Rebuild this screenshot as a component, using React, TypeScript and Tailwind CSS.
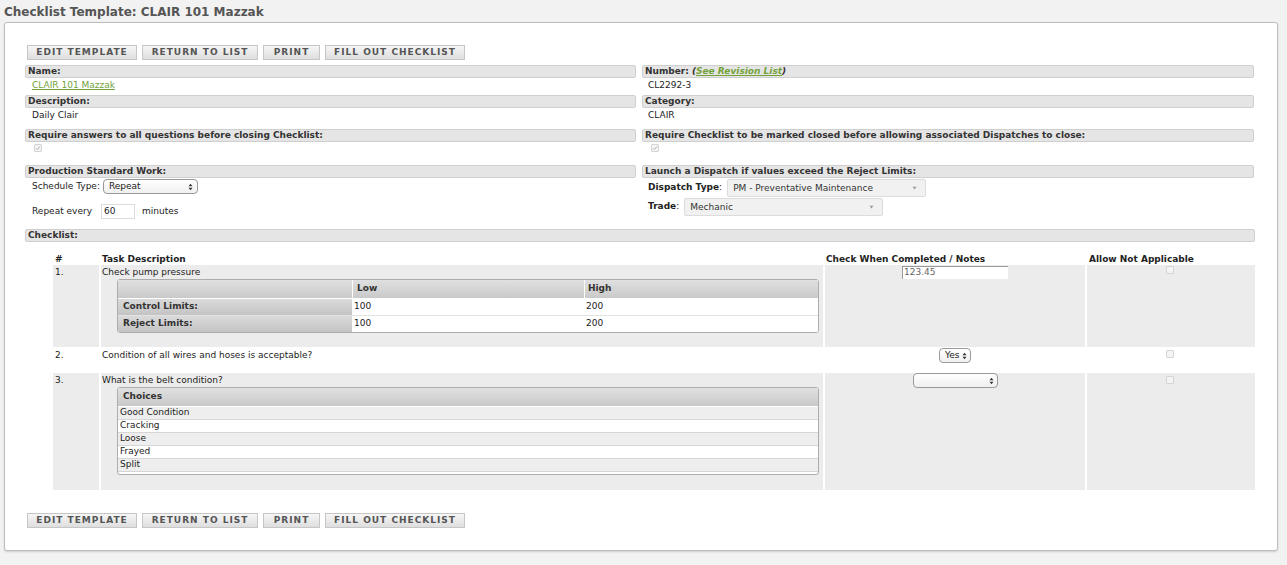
import React from "react";

const Button = ({ label, width }: { label: string; width: string }) => (
  <div
    className={`${width} h-[15px] flex items-center justify-center border border-[#c6c6c6] bg-gradient-to-b from-[#f6f6f6] to-[#dedede] text-[9px] font-bold tracking-[1px] text-[#555] leading-none`}
  >
    {label}
  </div>
);

const ButtonBar = () => (
  <div className="flex gap-[5px] pl-[2px]">
    <Button label="EDIT TEMPLATE" width="w-[110px]" />
    <Button label="RETURN TO LIST" width="w-[116px]" />
    <Button label="PRINT" width="w-[57px]" />
    <Button label="FILL OUT CHECKLIST" width="w-[140px]" />
  </div>
);

const SectionHeader = ({ children }: { children: React.ReactNode }) => (
  <div className="h-[13px] flex items-center border border-[#cfcfcf] rounded-[2px] bg-[#e5e5e5] pl-[2px] text-[9px] font-bold text-[#333] leading-none">
    {children}
  </div>
);

const Checkbox = ({ checked = false }: { checked?: boolean }) => (
  <div className="w-[8px] h-[8px] border border-[#d4d4d4] rounded-[1px] bg-[#f4f4f4] flex items-center justify-center">
    {checked && (
      <svg width="6" height="6" viewBox="0 0 6 6">
        <path d="M1 3.2 L2.4 4.6 L5 1.4" stroke="#b5b5b5" strokeWidth="1" fill="none" />
      </svg>
    )}
  </div>
);

const UpDown = () => (
  <svg width="5" height="8" viewBox="0 0 5 8" className="shrink-0">
    <path d="M0.5 3.2 L2.5 0.8 L4.5 3.2 Z" fill="#333" />
    <path d="M0.5 4.8 L2.5 7.2 L4.5 4.8 Z" fill="#333" />
  </svg>
);

const MacSelect = ({ value, width }: { value: string; width: string }) => (
  <div
    className={`${width} h-[15px] flex items-center justify-between border border-[#9a9a9a] rounded-[4px] bg-gradient-to-b from-white to-[#f0f0f0] pl-[5px] pr-[4px] text-[9px] text-[#222] leading-none`}
  >
    <span>{value}</span>
    <UpDown />
  </div>
);

const FlatSelect = ({ value, width }: { value: string; width: string }) => (
  <div
    className={`${width} h-[18px] flex items-center justify-between border border-[#dcdcdc] rounded-[2px] bg-[#f1f1f1] pl-[5px] pr-[8px] text-[9px] text-[#333] leading-none`}
  >
    <span>{value}</span>
    <svg width="5" height="4" viewBox="0 0 5 4">
      <path d="M0.5 0.8 L4.5 0.8 L2.5 3.4 Z" fill="#999" />
    </svg>
  </div>
);

const limitRows = [
  { label: "Control Limits:", low: "100", high: "200" },
  { label: "Reject Limits:", low: "100", high: "200" },
];

const LimitsTable = () => (
  <div className="ml-[16px] mr-[4px] border border-[#adadad] rounded-[3px] overflow-hidden bg-white">
    <div className="grid grid-cols-[234px_1fr_233px] gap-x-[1px] bg-white">
      <div className="h-[18px] bg-gradient-to-b from-[#e0e0e0] to-[#c9c9c9]" />
      <div className="h-[18px] flex items-center pl-[4px] bg-gradient-to-b from-[#e0e0e0] to-[#c9c9c9] text-[9px] font-bold text-[#333]">
        Low
      </div>
      <div className="h-[18px] flex items-center pl-[3px] bg-gradient-to-b from-[#e0e0e0] to-[#c9c9c9] text-[9px] font-bold text-[#333]">
        High
      </div>
    </div>
    {limitRows.map((r, i) => (
      <div
        key={r.label}
        className={`grid grid-cols-[234px_1fr_233px] gap-x-[1px] bg-white ${i > 0 ? "border-t border-[#e2e2e2]" : "border-t border-white"}`}
      >
        <div className="h-[16px] flex items-center pl-[5px] bg-gradient-to-b from-[#dadada] to-[#c4c4c4] text-[9px] font-bold text-[#333]">
          {r.label}
        </div>
        <div className="h-[16px] flex items-start pt-[1px] pl-[1px] text-[9px] text-[#222]">{r.low}</div>
        <div className="h-[16px] flex items-start pt-[1px] pl-[1px] text-[9px] text-[#222]">{r.high}</div>
      </div>
    ))}
  </div>
);

const choices = ["Good Condition", "Cracking", "Loose", "Frayed", "Split"];

const ChoicesTable = () => (
  <div className="ml-[16px] mr-[4px] border border-[#adadad] rounded-[3px] overflow-hidden bg-white pb-[2px]">
    <div className="h-[18px] flex items-center pl-[5px] bg-gradient-to-b from-[#e0e0e0] to-[#c9c9c9] text-[9px] font-bold text-[#333]">
      Choices
    </div>
    <div className="pt-[1px]">
      {choices.map((c, i) => (
        <div
          key={c}
          className={`h-[13px] flex items-center pl-[2px] border-b border-[#d6d6d6] text-[9px] text-[#222] ${i % 2 === 0 ? "bg-[#eeeeee]" : "bg-white"}`}
        >
          {c}
        </div>
      ))}
    </div>
  </div>
);

const cols = "grid grid-cols-[46px_722px_260px_168px] gap-x-[2px]";

export default function App() {
  return (
    <div className="min-h-[565px] bg-[#f2f2f2] font-['DejaVu_Sans',Verdana,sans-serif] text-[#222]">
      <div className="h-[22px] pl-[4px] pt-[3px] text-[12px] font-bold text-[#555]">
        Checklist Template: CLAIR 101 Mazzak
      </div>
      <div className="ml-[4px] w-[1274px] bg-white border border-[#bdbdbd] rounded-[3px] shadow-[0_1px_2px_rgba(0,0,0,0.15)] pt-[22px] pl-[20px] pr-[22px] pb-[22px]">
        <ButtonBar />

        <div className="mt-[5px] grid grid-cols-[611px_612px] gap-x-[6px]">
          {/* left column */}
          <div className="flex flex-col">
            <SectionHeader>Name:</SectionHeader>
            <div className="h-[17px] pl-[7px] pt-[1px] text-[9px]">
              <span className="text-[#74a23a] underline">CLAIR 101 Mazzak</span>
            </div>
            <SectionHeader>Description:</SectionHeader>
            <div className="h-[21px] pl-[7px] pt-[1px] text-[9px]">Daily Clair</div>
            <SectionHeader>Require answers to all questions before closing Checklist:</SectionHeader>
            <div className="h-[23px] pl-[9px] pt-[2px]">
              <Checkbox checked />
            </div>
            <SectionHeader>Production Standard Work:</SectionHeader>
            <div className="flex items-center h-[15px] mt-[1px] pl-[7px] text-[9px]">
              <span className="mr-[3px]">Schedule Type:</span>
              <MacSelect value="Repeat" width="w-[95px]" />
            </div>
            <div className="flex items-center h-[15px] mt-[10px] pl-[7px] text-[9px]">
              <span className="mr-[9px]">Repeat every</span>
              <div className="w-[34px] h-[15px] border border-[#dcdcdc] pl-[2px] flex items-center">60</div>
              <span className="ml-[7px]">minutes</span>
            </div>
          </div>

          {/* right column */}
          <div className="flex flex-col">
            <SectionHeader>
              Number: <span className="italic ml-[3px]">(</span>
              <span className="italic text-[#74a23a] underline">See Revision List</span>
              <span className="italic">)</span>
            </SectionHeader>
            <div className="h-[17px] pl-[6px] pt-[1px] text-[9px]">CL2292-3</div>
            <SectionHeader>Category:</SectionHeader>
            <div className="h-[21px] pl-[6px] pt-[1px] text-[9px]">CLAIR</div>
            <SectionHeader>
              Require Checklist to be marked closed before allowing associated Dispatches to close:
            </SectionHeader>
            <div className="h-[23px] pl-[9px] pt-[2px]">
              <Checkbox checked />
            </div>
            <SectionHeader>Launch a Dispatch if values exceed the Reject Limits:</SectionHeader>
            <div className="flex items-center mt-[1px] pl-[6px] text-[9px]">
              <span className="font-bold">Dispatch Type</span>
              <span className="mr-[5px]">:</span>
              <FlatSelect value="PM - Preventative Maintenance" width="w-[199px]" />
            </div>
            <div className="flex items-center mt-[1px] pl-[6px] text-[9px]">
              <span className="font-bold">Trade</span>
              <span className="mr-[5px]">:</span>
              <FlatSelect value="Mechanic" width="w-[199px]" />
            </div>
          </div>
        </div>

        <div className="mt-[10px]">
          <SectionHeader>Checklist:</SectionHeader>
        </div>

        <div className="ml-[28px] mt-[10px]">
          <div className={`${cols} h-[12px] text-[9px] font-bold text-[#222] leading-none items-end`}>
            <div className="pl-[2px]">#</div>
            <div className="pl-[1px]">Task Description</div>
            <div className="pl-[1px]">Check When Completed / Notes</div>
            <div className="pl-[2px]">Allow Not Applicable</div>
          </div>

          {/* row 1 */}
          <div className={`${cols} mt-[1px]`}>
            <div className="bg-[#ececec] pl-[2px] pt-[1px] text-[9px]">1.</div>
            <div className="bg-[#ececec] pt-[1px] pb-[14px] text-[9px]">
              <div className="pl-[1px] h-[13px]">Check pump pressure</div>
              <LimitsTable />
            </div>
            <div className="bg-[#ececec] pt-[1px] flex justify-center">
              <div className="w-[106px] h-[13px] bg-white border-l border-t border-[#999] pl-[1px] text-[9px] text-[#666] flex items-center">
                123.45
              </div>
            </div>
            <div className="bg-[#ececec] pt-[1px] flex justify-center pr-[2px]">
              <Checkbox />
            </div>
          </div>

          {/* row 2 */}
          <div className={`${cols} h-[26px]`}>
            <div className="pl-[2px] pt-[2px] text-[9px]">2.</div>
            <div className="pl-[1px] pt-[2px] text-[9px]">Condition of all wires and hoses is acceptable?</div>
            <div className="flex justify-center pt-[1px]">
              <div className="w-[32px] h-[15px] flex items-center justify-between border border-[#9a9a9a] rounded-[4px] bg-gradient-to-b from-white to-[#f0f0f0] pl-[5px] pr-[3px] text-[9px] leading-none">
                <span>Yes</span>
                <UpDown />
              </div>
            </div>
            <div className="flex justify-center pt-[3px] pr-[2px]">
              <Checkbox />
            </div>
          </div>

          {/* row 3 */}
          <div className={cols}>
            <div className="bg-[#ececec] pl-[2px] pt-[1px] text-[9px]">3.</div>
            <div className="bg-[#ececec] pt-[1px] pb-[15px] text-[9px]">
              <div className="pl-[1px] h-[13px]">What is the belt condition?</div>
              <ChoicesTable />
            </div>
            <div className="bg-[#ececec] flex justify-center">
              <div className="w-[85px] h-[15px] flex items-center justify-end border border-[#9a9a9a] rounded-[4px] bg-gradient-to-b from-white to-[#f0f0f0] pr-[3px]">
                <UpDown />
              </div>
            </div>
            <div className="bg-[#ececec] pt-[3px] flex justify-center pr-[2px]">
              <Checkbox />
            </div>
          </div>
        </div>

        <div className="mt-[23px]">
          <ButtonBar />
        </div>
      </div>
    </div>
  );
}
